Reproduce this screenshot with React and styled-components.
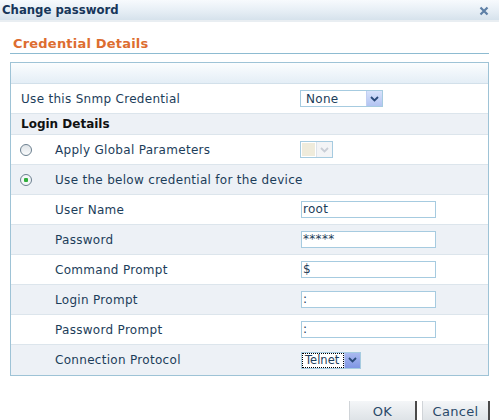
import styled, { createGlobalStyle } from "styled-components";

const Global = createGlobalStyle`
    html, body { margin:0; padding:0; background:#fff; }
    body { font-family: "DejaVu Sans", Verdana, sans-serif; font-size:12px; letter-spacing:0.3px; color:#1c3d5a; }
`

const Arrow = ({ faded }) => (
    <svg width="9" height="6" viewBox="0 0 9 6">
        <path d="M1 1 L4.5 4.5 L8 1" fill="none" stroke={faded ? "#c9ced6" : "#2b4a7a"} strokeWidth="1.8" />
    </svg>
);

const App = () => {
    const fields = [
        { label: "User Name", value: "root" },
        { label: "Password", value: "*****" },
        { label: "Command Prompt", value: "$" },
        { label: "Login Prompt", value: ":" },
        { label: "Password Prompt", value: ":" },
    ];

    return (
        <Dialog>
            <Global />
            <TitleBar>
                <Title>Change password</Title>
                <Close>
                    <svg width="10" height="10" viewBox="0 0 10 10">
                        <path d="M1.5 1.5 L8.5 8.5 M8.5 1.5 L1.5 8.5" stroke="#5d7fa6" strokeWidth="2.2" />
                    </svg>
                </Close>
            </TitleBar>
            <Body>
                <SectionTitle>Credential Details</SectionTitle>
                <Panel>
                    <PanelHead />
                    <Row>
                        <Label>Use this Snmp Credential</Label>
                        <Select width={81}>
                            <SelectText>None</SelectText>
                            <SelectBtn><Arrow /></SelectBtn>
                        </Select>
                    </Row>
                    <Row alt short>
                        <Bold>Login Details</Bold>
                    </Row>
                    <Row>
                        <RadioLabel>
                            <Radio />
                            <span>Apply Global Parameters</span>
                        </RadioLabel>
                        <Select width={31} disabled>
                            <SelectText disabled />
                            <SelectBtn disabled><Arrow faded /></SelectBtn>
                        </Select>
                    </Row>
                    <Row alt>
                        <RadioLabel>
                            <Radio checked />
                            <span>Use the below credential for the device</span>
                        </RadioLabel>
                    </Row>
                    {fields.map((f, i) => (
                        <Row key={f.label} alt={i % 2 === 1}>
                            <Label indent>{f.label}</Label>
                            <Input>{f.value}</Input>
                        </Row>
                    ))}
                    <Row alt last>
                        <Label indent>Connection Protocol</Label>
                        <Select width={58}>
                            <SelectText focused>Telnet</SelectText>
                            <SelectBtn blue><Arrow /></SelectBtn>
                        </Select>
                    </Row>
                </Panel>
                <Buttons>
                    <Button>OK</Button>
                    <Button>Cancel</Button>
                </Buttons>
            </Body>
        </Dialog>
    );
}

const Dialog = styled.div`
    width:499px;
    height:420px;
    overflow:hidden;
    background:#fff;
`

const TitleBar = styled.div`
    height:20px;
    display:flex;
    align-items:center;
    justify-content:space-between;
    padding:0 10px 0 2px;
    background:linear-gradient(#f7fafd, #e6eef5 55%, #d6e2ec);
    border-bottom:2px solid #e9eef2;
`

const Title = styled.div`
    font-size:11.7px;
    letter-spacing:0;
    font-weight:bold;
    color:#17365a;
`

const Close = styled.div`
    display:flex;
    margin-top:2px;
`

const Body = styled.div`
    padding:14px 10px 0 10px;
`

const SectionTitle = styled.div`
    font-size:13px;
    letter-spacing:0.2px;
    font-weight:bold;
    color:#dd6d30;
    padding:0 0 2px 3px;
    border-bottom:1px solid #8dbbd1;
    margin-bottom:8px;
`

const Panel = styled.div`
    border:1px solid #9ec3d6;
    display:flex;
    flex-direction:column;
`

const PanelHead = styled.div`
    height:20px;
    background:linear-gradient(#fbfdfe, #e4eef6);
    border-bottom:1px solid #d2e0ea;
`

const Row = styled.div`
    height:${p => p.short ? 21 : 30}px;
    display:flex;
    align-items:center;
    background:${p => p.alt ? "#edf1f6" : "#fff"};
    border-bottom:${p => p.last ? "none" : "1px solid #dce5ec"};
    box-sizing:border-box;
    padding-left:10px;
    white-space:nowrap;
`

const Label = styled.div`
    width:${p => p.indent ? 246 : 279}px;
    padding-left:${p => p.indent ? 34 : 0}px;
    color:#1c3d5a;
`

const Bold = styled.div`
    font-weight:bold;
    letter-spacing:0;
    color:#111;
`

const RadioLabel = styled.div`
    width:280px;
    display:flex;
    align-items:center;
    gap:23px;
    margin-left:-1px;
`

const Radio = styled.span`
    width:10px;
    height:10px;
    border-radius:50%;
    border:1px solid #6b7f8f;
    background:${p => p.checked ? "radial-gradient(circle, #2fae3a 0 2px, #f3f6f8 2.5px)" : "linear-gradient(#dfe4e8, #fafbfc)"};
    flex:none;
`

const Select = styled.div`
    width:${p => p.width}px;
    height:15px;
    display:flex;
    border:1px solid #a6cbe0;
    background:#fff;
`

const SelectText = styled.div`
    flex:1;
    padding-left:${p => p.disabled ? 0 : p.focused ? 2 : 4}px;
    letter-spacing:${p => p.focused ? 0 : 0.3}px;
    font-size:${p => p.focused ? 11.5 : 12}px;
    margin:1px;
    background:${p => p.disabled ? "#efebdb" : "#fff"};
    outline:${p => p.focused ? "1px dotted #000" : "none"};
    display:flex;
    align-items:center;
    color:#1c3d5a;
`

const SelectBtn = styled.div`
    width:15px;
    flex:none;
    display:flex;
    align-items:center;
    justify-content:center;
    background:${p => p.disabled ? "#f3f4f6" : p.blue ? "linear-gradient(#a9b9ef, #7f96e4)" : "linear-gradient(#d8e2fb, #b3c4f2)"};
    border-left:1px solid ${p => p.disabled ? "#dde3ea" : "#c2cff2"};
`

const Input = styled.div`
    width:132px;
    height:15px;
    border:1px solid #a6cbe0;
    background:#fff;
    line-height:15px;
    padding-left:1px;
    color:#1c3d5a;
`

const Buttons = styled.div`
    display:flex;
    justify-content:flex-end;
    gap:5px;
    padding-top:25px;
    margin-right:-1px;
`

const Button = styled.div`
    width:65px;
    height:20px;
    display:flex;
    justify-content:center;
    align-items:center;
    font-size:13px;
    color:#2a4a6a;
    background:linear-gradient(#f4f6f8, #dde2e6);
    border-right:2px solid #4a4a4a;
    border-left:1px solid #d0d4d8;
`

export default App;
